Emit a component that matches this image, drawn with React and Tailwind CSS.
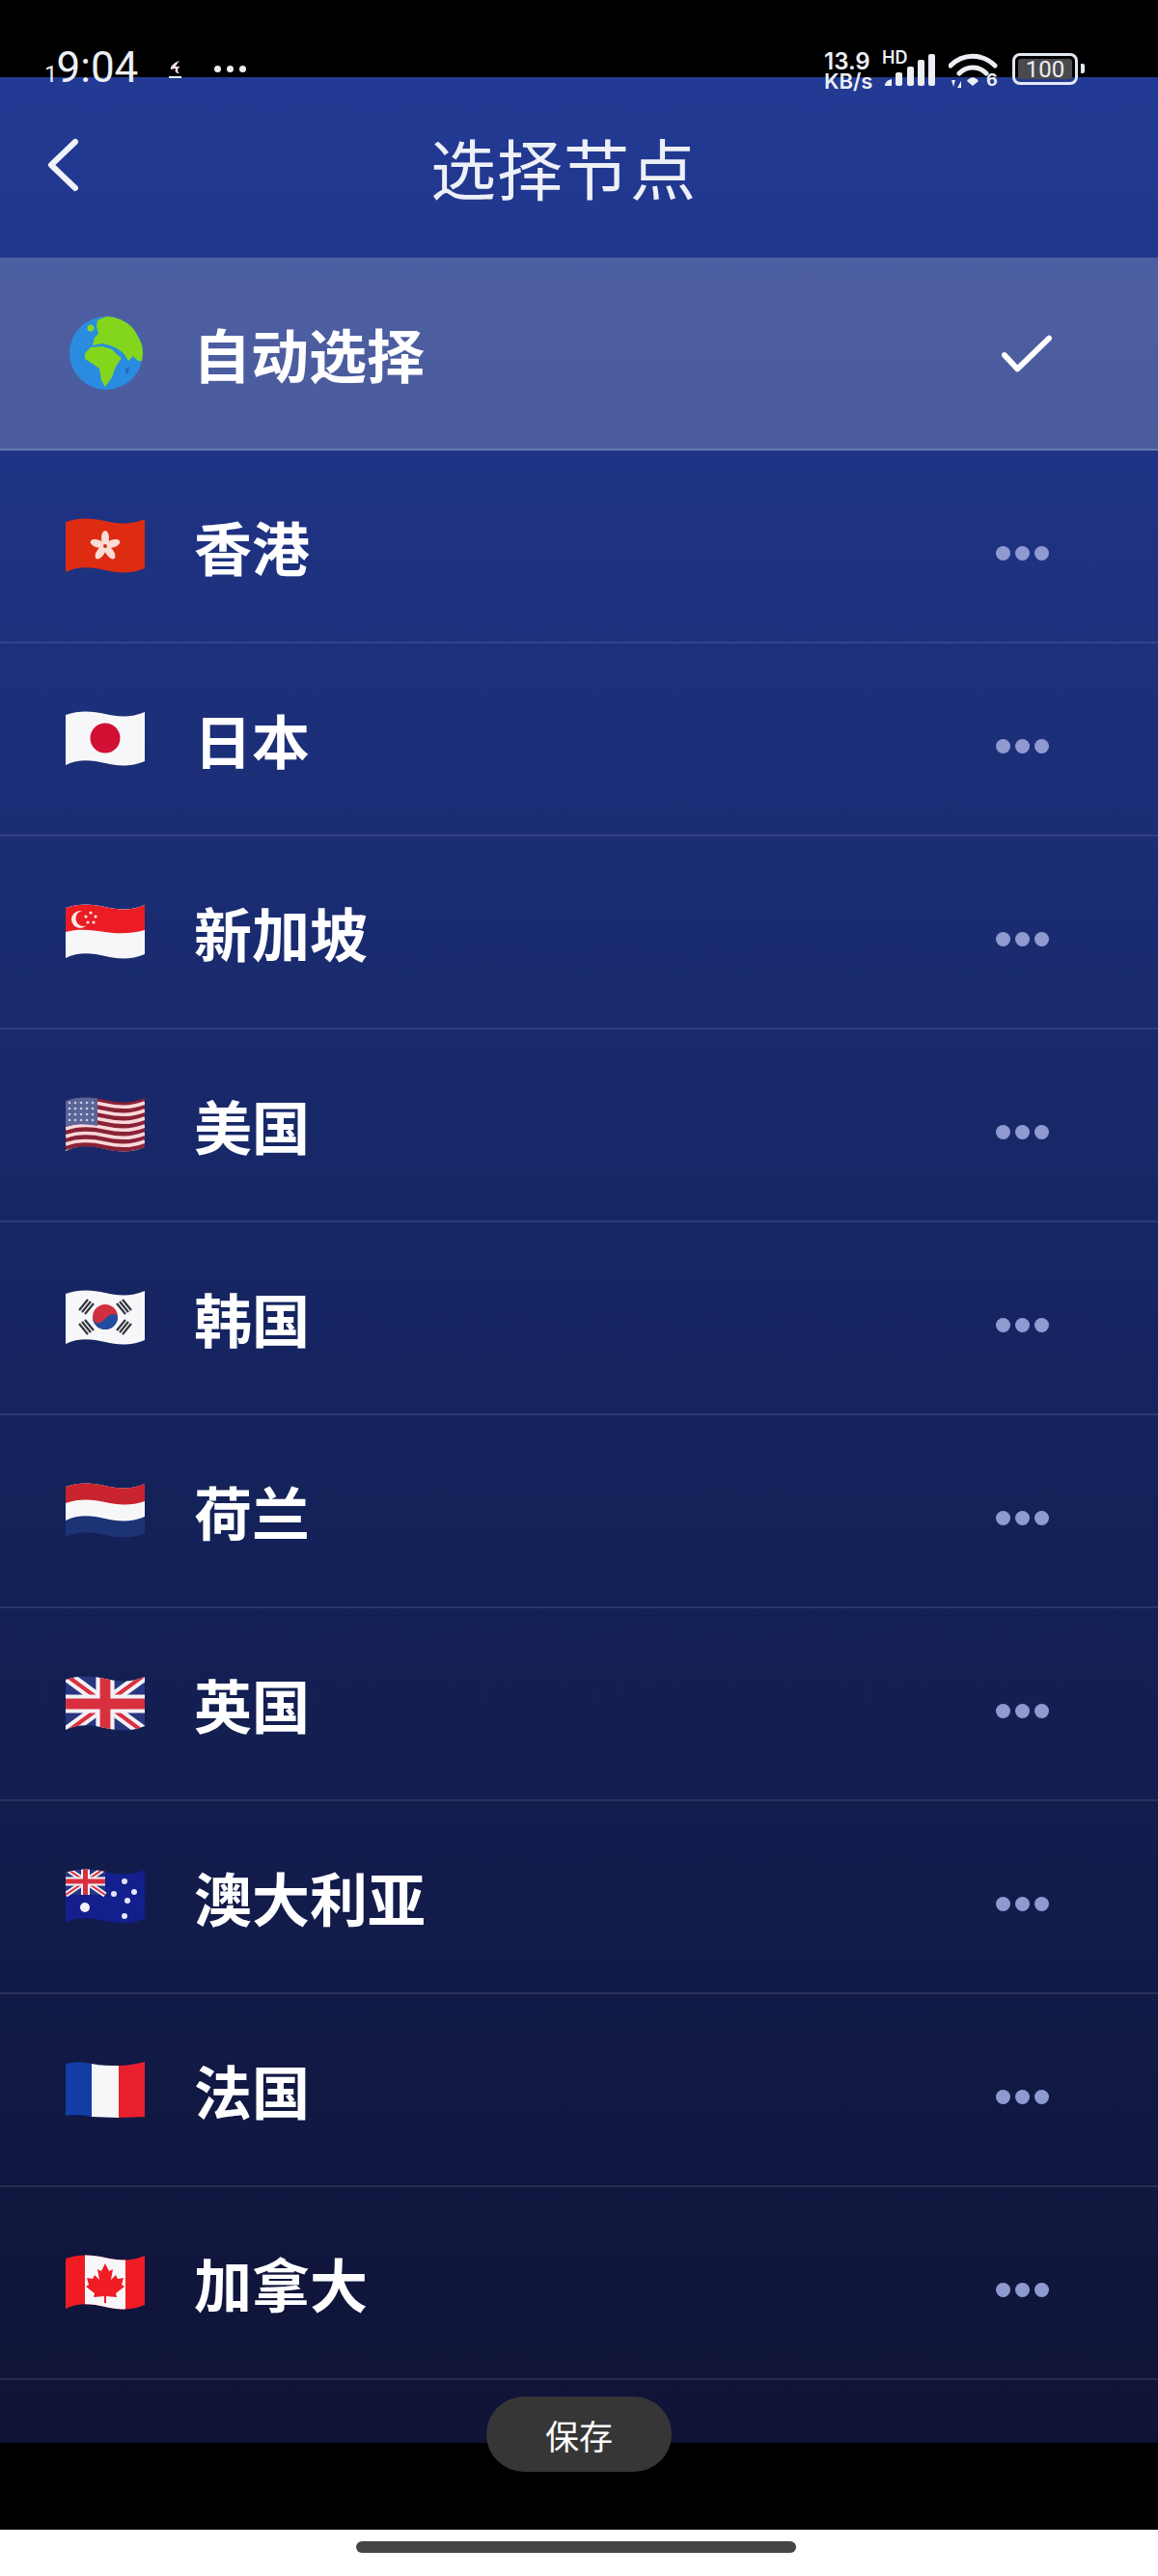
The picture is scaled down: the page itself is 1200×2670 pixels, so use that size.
const cjk = "font-['Noto_Sans_CJK_SC','Noto_Sans',sans-serif]";
const wave = "M0 5C14 0 28 1 41 4S68 8 82 2V53C68 59 54 58 41 55S14 50 0 57Z";

function WavyFlag({ id, children }) {
  return (
    <svg viewBox="0 0 82 60" className="w-[82px] h-[60px] shrink-0 blur-[0.5px]">
      <clipPath id={id}>
        <path d={wave} />
      </clipPath>
      <g clipPath={`url(#${id})`}>{children}</g>
    </svg>
  );
}

function UnionJack({ w, h }) {
  return (
    <g>
      <rect width={w} height={h} fill="#28357f" />
      <path d={`M0 0L${w} ${h}M${w} 0L0 ${h}`} stroke="#f2f2f6" strokeWidth={h * 0.2} />
      <path d={`M0 0L${w} ${h}M${w} 0L0 ${h}`} stroke="#d9303f" strokeWidth={h * 0.07} />
      <path d={`M${w / 2} 0V${h}M0 ${h / 2}H${w}`} stroke="#f2f2f6" strokeWidth={h * 0.32} />
      <path d={`M${w / 2} 0V${h}M0 ${h / 2}H${w}`} stroke="#d9303f" strokeWidth={h * 0.18} />
    </g>
  );
}

const flags = {
  hk: (
    <WavyFlag id="hk">
      <rect width="82" height="60" fill="#dd2c12" />
      {[0, 72, 144, 216, 288].map((a) => (
        <ellipse key={a} cx="41" cy="22" rx="4" ry="8" fill="#fbdcd6" transform={`rotate(${a} 41 30)`} />
      ))}
      <circle cx="41" cy="30" r="2" fill="#dd2c12" />
    </WavyFlag>
  ),
  jp: (
    <WavyFlag id="jp">
      <rect width="82" height="60" fill="#f7f7f9" />
      <circle cx="41" cy="29" r="15.5" fill="#d21034" />
    </WavyFlag>
  ),
  sg: (
    <WavyFlag id="sg">
      <rect width="82" height="60" fill="#f7f7f9" />
      <path d="M0 5C14 0 28 1 41 4S68 8 82 2V28C68 32 54 32 41 30S14 26 0 30Z" fill="#ec1c24" />
      <circle cx="15" cy="17" r="9" fill="#fbe9e9" />
      <circle cx="18.5" cy="16" r="8" fill="#ec1c24" />
      {[[26, 10], [31, 14], [29, 20], [23, 20], [21, 14]].map(([x, y]) => (
        <circle key={x} cx={x} cy={y} r="1.6" fill="#fbe9e9" />
      ))}
    </WavyFlag>
  ),
  us: (
    <WavyFlag id="us">
      <rect width="82" height="60" fill="#8a2236" />
      {[8, 16, 24, 32, 40, 48, 56].map((y) => (
        <path key={y} d={`M0 ${y + 2}C14 ${y - 3} 28 ${y - 2} 41 ${y + 1}S68 ${y + 5} 82 ${y - 1}`} stroke="#f8d8dc" strokeWidth="3.6" fill="none" />
      ))}
      <path d="M0 0H33V31C22 29 10 28 0 32Z" fill="#5a6697" />
      {[6, 12, 18, 24].map((y) =>
        [4, 10, 16, 22, 28].map((x) => <circle key={`${x}-${y}`} cx={x} cy={y + 1} r="1.3" fill="#c9cde2" />)
      )}
    </WavyFlag>
  ),
  kr: (
    <WavyFlag id="kr">
      <rect width="82" height="60" fill="#f7f7f9" />
      <circle cx="41" cy="29" r="13" fill="#cf2f3e" />
      <path d="M28 29C30 38 36 36 41 31S52 24 54 29A13 13 0 0 1 28 29Z" fill="#1f4e9f" />
      <g stroke="#33363d" strokeWidth="2.2">
        <path d="M14 24L23 13M17 26L26 15M20 28L29 17" transform="translate(0 -2)" />
        <path d="M59 13L68 24M56 15L65 26M53 17L62 28" transform="translate(0 -2)" />
        <path d="M14 34L23 45M17 32L26 43M20 30L29 41" transform="translate(0 2)" />
        <path d="M68 34L59 45M65 32L56 43M62 30L53 41" transform="translate(0 2)" />
      </g>
    </WavyFlag>
  ),
  nl: (
    <WavyFlag id="nl">
      <rect width="82" height="60" fill="#1c3375" />
      <path d="M0 0H82V36C68 42 54 41 41 38S14 33 0 40Z" fill="#f7f7f9" />
      <path d="M0 0H82V20C68 25 54 24 41 21S14 17 0 22Z" fill="#c9232e" />
    </WavyFlag>
  ),
  gb: (
    <WavyFlag id="gb">
      <UnionJack w={82} h={60} />
    </WavyFlag>
  ),
  au: (
    <WavyFlag id="au">
      <rect width="82" height="60" fill="#121f8c" />
      <UnionJack w={41} h={28} />
      <circle cx="20" cy="41" r="5" fill="#f2f2f6" />
      {[[61, 14], [71, 25], [50, 27], [64, 34], [61, 50]].map(([x, y]) => (
        <circle key={x} cx={x} cy={y} r="3" fill="#e4e6f6" />
      ))}
    </WavyFlag>
  ),
  fr: (
    <svg viewBox="0 0 82 60" className="w-[82px] h-[60px] shrink-0 blur-[0.5px]">
      <path d="M0 3C10 1 18 1 27 3V58C18 56 8 55 0 57Z" fill="#123ea6" />
      <path d="M27 3C36 5 46 5 55 5V59C46 59 36 58 27 58Z" fill="#f7f7f9" />
      <path d="M55 5C64 5 74 3 82 1V58C74 58 64 59 55 59Z" fill="#e8202e" />
    </svg>
  ),
  ca: (
    <WavyFlag id="ca">
      <rect width="82" height="60" fill="#ef1c24" />
      <path d="M20 0C34 0 48 2 62 4V60C48 60 34 58 20 56Z" fill="#f7f7f9" />
      <path d="M41 10L45 18L49 16L47 27L52 22L54 26L60 25L58 32L61 34L52 41L53 45L42 44L42 51H40L40 44L29 45L30 41L21 34L24 32L22 25L28 26L30 22L35 27L33 16L37 18Z" fill="#ef1c24" />
    </WavyFlag>
  ),
};

const nodes = [
  { name: "香港", flag: "hk" },
  { name: "日本", flag: "jp" },
  { name: "新加坡", flag: "sg" },
  { name: "美国", flag: "us" },
  { name: "韩国", flag: "kr" },
  { name: "荷兰", flag: "nl" },
  { name: "英国", flag: "gb" },
  { name: "澳大利亚", flag: "au" },
  { name: "法国", flag: "fr" },
  { name: "加拿大", flag: "ca" },
];

function Globe() {
  return (
    <svg viewBox="0 0 76 76" className="w-[76px] h-[76px] shrink-0 blur-[0.5px]">
      <circle cx="38" cy="38" r="38" fill="#2a8ce0" />
      <clipPath id="globe">
        <circle cx="38" cy="38" r="38" />
      </clipPath>
      <g clipPath="url(#globe)" fill="#84d61c">
        {/* europe + asia */}
        <path d="M29 4L38 0H52L66 12L76 30V46L71 46L66 41L61 46L56 38L49 33L42 30L34 28L24 30L26 22L30 18L28 10Z" />
        {/* africa */}
        <path d="M22 32L34 31L44 34L50 40L54 43L48 52L44 63L37 73L33 66L31 54L24 49L16 44L16 38Z" />
        <circle cx="22" cy="12" r="3.5" />
        <path d="M58 54L62 52L61 59L58 60Z" fill="#1f6fc0" />
      </g>
    </svg>
  );
}

function Dots() {
  return (
    <div className="flex gap-[5px] mt-[14px]">
      <span className="w-[15px] h-[15px] rounded-full bg-[#8f9ad0]" />
      <span className="w-[15px] h-[15px] rounded-full bg-[#8f9ad0]" />
      <span className="w-[15px] h-[15px] rounded-full bg-[#8f9ad0]" />
    </div>
  );
}

function StatusBar() {
  return (
    <div className="absolute top-0 left-0 w-full h-[95px] text-[#eceef4]">
      <div className="absolute left-[46px] top-[44px] flex items-baseline font-['Roboto',sans-serif] text-[44px] leading-[52px]">
        <span className="text-[24px] -mr-[1px]">1</span>
        <span>9:04</span>
      </div>
      <svg viewBox="0 0 16 20" className="absolute left-[174px] top-[62px] w-[16px] h-[20px]">
        <path d="M12 1C6 3 2 7 3 10L8 9C7 12 8 14 12 14C9 12 10 8 13 7L8 7C9 5 10 3 12 1Z" fill="#f7dede" />
        <rect x="1" y="17" width="13" height="2" fill="#eceef4" />
      </svg>
      <div className="absolute left-[222px] top-[68px] flex gap-[6px]">
        <span className="w-[7px] h-[7px] rounded-full bg-[#eceef4]" />
        <span className="w-[7px] h-[7px] rounded-full bg-[#eceef4]" />
        <span className="w-[7px] h-[7px] rounded-full bg-[#eceef4]" />
      </div>
      <div className="absolute left-[854px] top-[52px] font-['Inter',sans-serif] font-semibold">
        <div className="text-[24px] leading-[23px]">13.9</div>
        <div className="text-[22px] leading-[18px]">KB/s</div>
      </div>
      <div className="absolute left-[914px] top-[51px] font-['Inter',sans-serif] font-semibold text-[18px] leading-[18px]">HD</div>
      <svg viewBox="0 0 52 34" className="absolute left-[917px] top-[56px] w-[52px] h-[34px]" fill="#eceef4">
        <path d="M0 33C0 29 3 27 7 26V33Z" />
        <rect x="11" y="19" width="7" height="14" rx="2" />
        <rect x="23" y="13" width="7" height="20" rx="2" />
        <rect x="34" y="6" width="7" height="27" rx="2" />
        <rect x="45" y="0" width="7" height="33" rx="2" />
      </svg>
      <svg viewBox="0 0 52 38" className="absolute left-[983px] top-[54px] w-[52px] h-[38px]">
        <path d="M2 14C15 1 35 1 48 14" stroke="#eceef4" strokeWidth="5" fill="none" strokeLinecap="round" />
        <path d="M11 22C19 14 31 14 39 22" stroke="#eceef4" strokeWidth="5" fill="none" strokeLinecap="round" />
        <path d="M19 30C23 25 27 25 31 30L25 35Z" fill="#eceef4" />
        <path d="M3 29L7 29L5 36ZM9 37L13 30V37Z" fill="#eceef4" />
      </svg>
      <div className="absolute left-[1022px] top-[74px] font-['Inter',sans-serif] font-bold text-[18px] leading-[18px]">6</div>
      <div className="absolute left-[1049px] top-[55px] w-[68px] h-[33px] rounded-[8px] border-[3px] border-[#e3e7f1] p-[3px] box-border">
        <div className="h-full rounded-[3px] bg-[#4a4a4e] flex items-center justify-center font-['Roboto',sans-serif] text-[24px] leading-none">100</div>
      </div>
      <span className="absolute left-[1120px] top-[66px] w-[4px] h-[10px] rounded-r-[2px] bg-[#e3e7f1]" />
    </div>
  );
}

export default function App() {
  return (
    <div className={`relative w-[1200px] h-[2670px] bg-black overflow-hidden ${cjk}`}>
      <div className="h-[80px]" />
      <main className="h-[2452px] overflow-hidden bg-linear-to-b from-[#233a94] via-[#15245f] via-55% to-[#0f1336]">
        <header className="h-[187px] flex items-center relative">
          <svg viewBox="0 0 36 56" className="absolute left-[47px] top-[63px] w-[36px] h-[56px]">
            <path d="M31 4L6 28L31 52" stroke="#f0f2f8" strokeWidth="6" fill="none" strokeLinecap="round" strokeLinejoin="round" />
          </svg>
          <h1 className="w-full text-center text-[#eef0f7] text-[68px] leading-none font-normal pb-[2px] pr-[32px] tracking-[1px]">选择节点</h1>
        </header>
        <div className="h-[200px] flex items-center justify-between pl-[72px] pr-[110px] bg-white/20 border-b-2 border-[#6478b4]">
          <div className="flex items-center gap-[52px]">
            <Globe />
            <span className="text-white text-[60px] leading-none font-bold">自动选择</span>
          </div>
          <svg viewBox="0 0 54 40" className="w-[52px] h-[40px] mt-[2px]">
            <path d="M3 21L17 36L51 3" stroke="#fff" strokeWidth="6" fill="none" strokeLinecap="round" strokeLinejoin="round" />
          </svg>
        </div>
        {nodes.map((node) => (
          <div key={node.flag} className="h-[200px] flex items-center justify-between pl-[68px] pr-[113px] border-b-2 border-white/10">
            <div className="flex items-center gap-[51px]">
              {flags[node.flag]}
              <span className="text-white text-[60px] leading-none font-bold">{node.name}</span>
            </div>
            <Dots />
          </div>
        ))}
      </main>
      <div className="h-[90px]" />
      <footer className="h-[48px] bg-white flex items-center justify-center">
        <div className="w-[456px] h-[12px] rounded-full bg-[#444446] -mt-[12px] -ml-[6px]" />
      </footer>
      <button className="absolute left-[504px] top-[2484px] w-[192px] h-[78px] rounded-full bg-[#363636] text-white text-[35px] leading-none">
        保存
      </button>
      <StatusBar />
    </div>
  );
}
